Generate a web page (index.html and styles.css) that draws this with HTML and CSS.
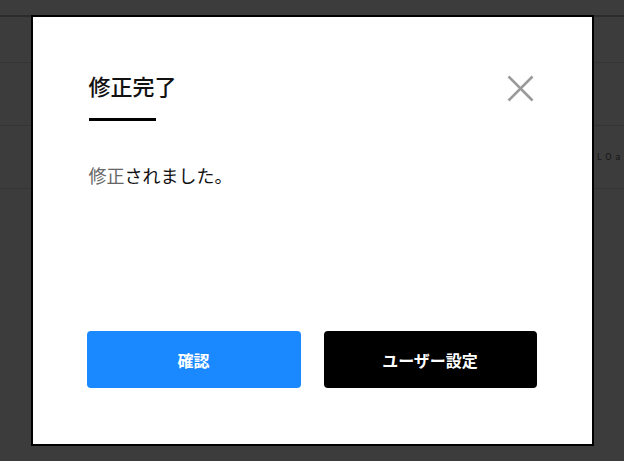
FILE: index.html
```html
<!DOCTYPE html>
<html lang="ja">
<head>
<meta charset="utf-8">
<link rel="stylesheet" href="styles.css">
</head>
<body>
<div class="page">
  <div class="page-header"></div>
  <div class="page-row page-row-first"></div>
  <div class="page-row"></div>
  <div class="page-row"><span class="row-text">LOa</span></div>
</div>
<div class="overlay">
  <div class="modal">
    <div class="modal-head">
      <h2 class="modal-title">修正完了</h2>
      <button class="modal-close" aria-label="閉じる">
        <svg width="27" height="27" viewBox="0 0 27 27"><path d="M1.5 1.5 L25.5 25.5 M25.5 1.5 L1.5 25.5" stroke="#9a9a9a" stroke-width="2.6" fill="none" stroke-linecap="butt"/></svg>
      </button>
    </div>
    <p class="modal-body"><span class="soft">修正</span>されました。</p>
    <div class="modal-actions">
      <button class="btn btn-primary">確認</button>
      <button class="btn btn-dark">ユーザー設定</button>
    </div>
  </div>
</div>
</body>
</html>
```
FILE: styles.css
```css
* { box-sizing: border-box; }
html, body { margin: 0; padding: 0; }
body {
  width: 624px;
  height: 461px;
  overflow: hidden;
  background: #3c3c3c;
  font-family: "Noto Sans CJK JP", "Noto Sans", sans-serif;
}
.page { width: 100%; }
.page-header {
  height: 17px;
  border-bottom: 2px solid #2b2b2b;
}
.page-row {
  height: 63px;
  border-bottom: 1px solid #343434;
  display: flex;
  align-items: center;
}
.page-row-first { height: 46px; }
.row-text {
  margin-left: 597px;
  white-space: nowrap;
  font-size: 8px;
  letter-spacing: 4px;
  color: #151515;
  font-family: "DejaVu Sans", sans-serif;
}
.overlay {
  position: fixed;
  inset: 0;
  display: flex;
  align-items: center;
  justify-content: center;
}
.modal {
  width: 563px;
  height: 431px;
  background: #fff;
  border: 2px solid #000;
  padding: 53px 55px 56px 56px;
  display: flex;
  flex-direction: column;
}
.modal-head {
  display: flex;
  justify-content: space-between;
  align-items: flex-start;
}
.modal-title {
  margin: 0;
  font-size: 22px;
  font-weight: 500;
  line-height: 30px;
  color: #111;
}
.modal-title::after {
  content: "";
  display: block;
  width: 67px;
  height: 3px;
  background: #000;
  margin-top: 18px;
}
.modal-close {
  border: 0;
  background: none;
  padding: 0;
  margin: 5px 3px 0 0;
  width: 27px;
  height: 27px;
  display: block;
}
.modal-close svg { display: block; }
.modal-body {
  margin: 40px 0 0;
  font-size: 18px;
  line-height: 28px;
  color: #111;
}
.soft { color: #666; }
.modal-actions {
  margin-top: auto;
  margin-left: -2px;
  display: flex;
  gap: 23px;
}
.btn {
  height: 57px;
  border: 0;
  border-radius: 4px;
  color: #fff;
  font-family: "Noto Sans CJK JP", sans-serif;
  font-size: 16px;
  font-weight: 700;
}
.btn-primary { width: 214px; background: #1a88ff; }
.btn-dark { width: 213px; background: #000; }
```
